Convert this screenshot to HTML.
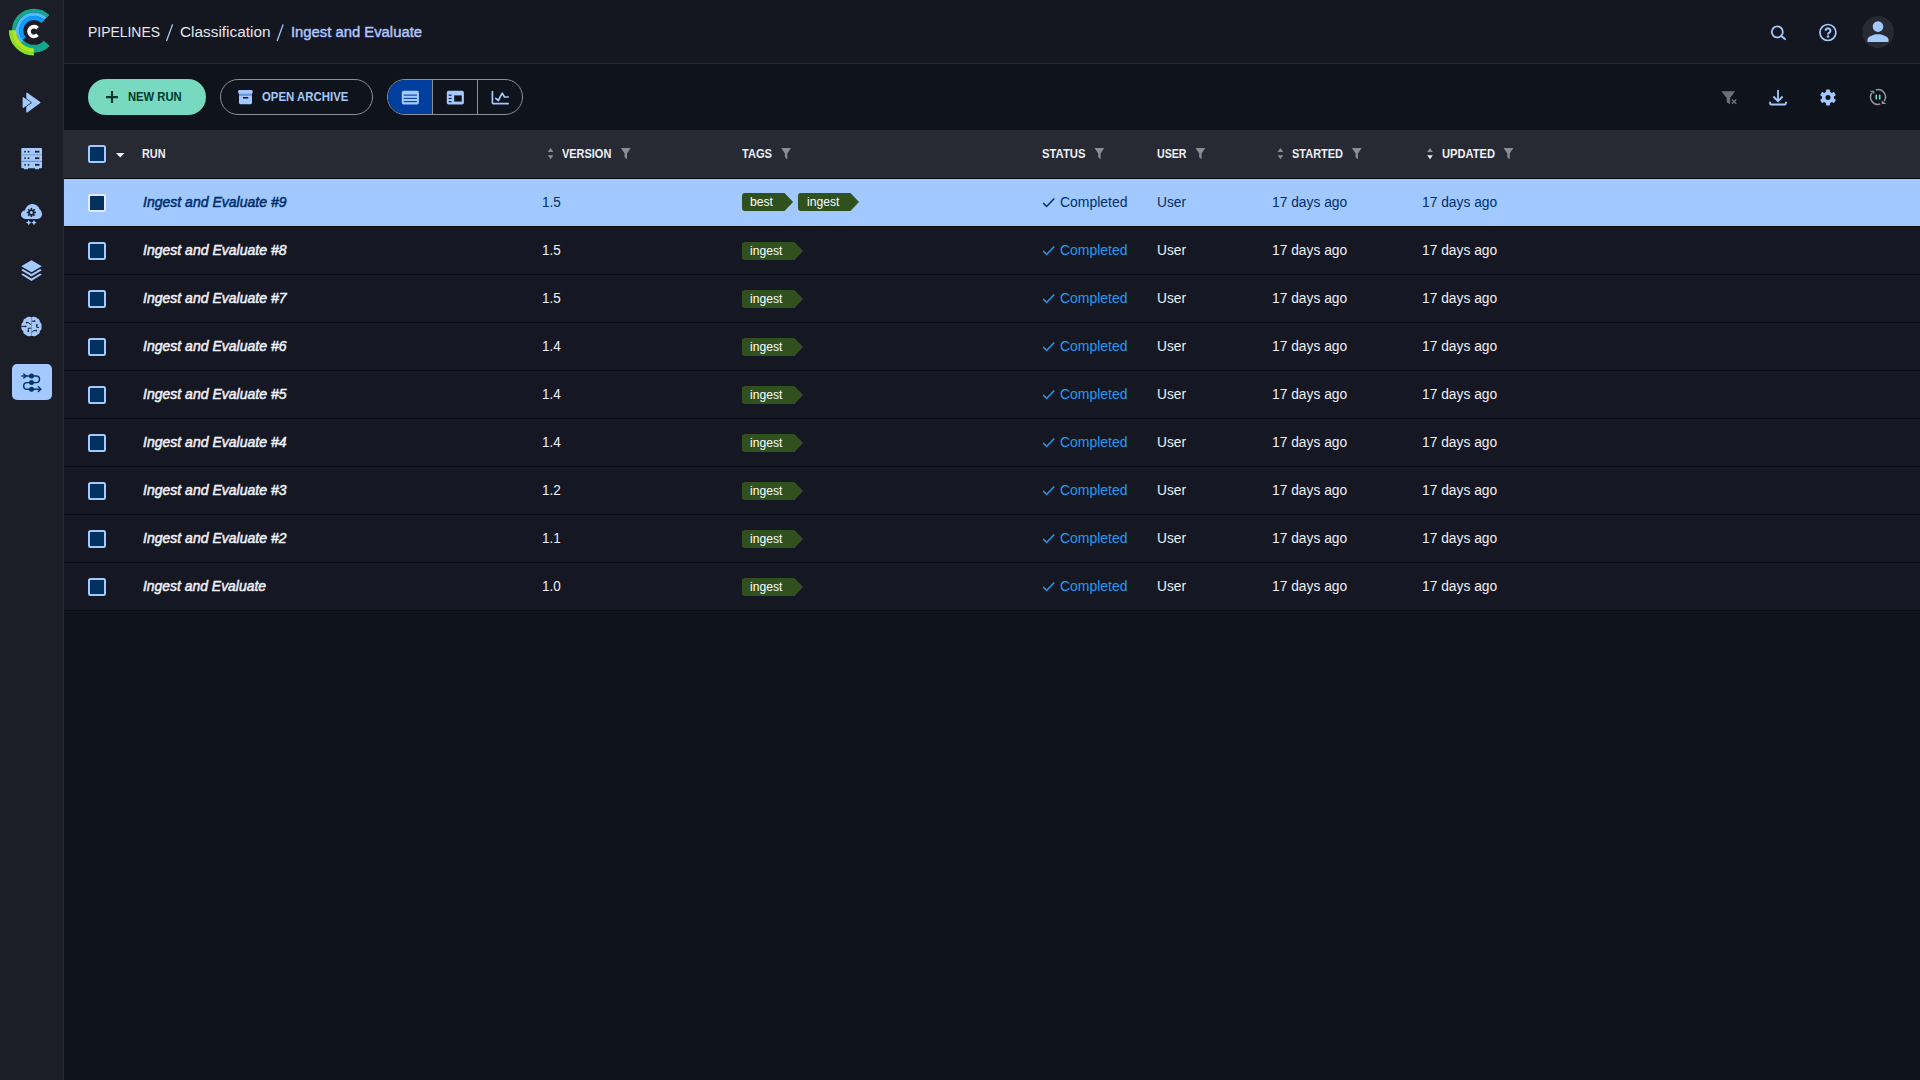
<!DOCTYPE html>
<html><head><meta charset="utf-8"><title>ClearML</title>
<style>
html,body{margin:0;padding:0;}
body{width:1920px;height:1080px;overflow:hidden;background:#0f131b;font-family:"Liberation Sans",sans-serif;position:relative;}
.b{position:absolute;box-sizing:border-box;}
.t{position:absolute;white-space:nowrap;transform-origin:0 50%;}
svg.ov{position:absolute;left:0;top:0;width:1920px;height:1080px;}
</style></head><body>
<div class="b" style="left:0px;top:0px;width:64px;height:1080px;background:#1b1e27;border-right:1px solid #252932;"></div>
<div class="b" style="left:64px;top:0px;width:1856px;height:64px;background:#141720;border-bottom:1px solid #252932;"></div>
<div class="b" style="left:64px;top:130px;width:1856px;height:48px;background:#272a33;"></div>
<div class="b" style="left:64px;top:178px;width:1856px;height:1px;background:#06080d;"></div>
<div class="b" style="left:64px;top:179px;width:1856px;height:47px;background:#a1c9ff;"></div>
<div class="b" style="left:64px;top:226px;width:1856px;height:1px;background:#06080d;"></div>
<div class="b" style="left:64px;top:227px;width:1856px;height:47px;background:#151822;"></div>
<div class="b" style="left:64px;top:274px;width:1856px;height:1px;background:#0a0d15;"></div>
<div class="b" style="left:64px;top:275px;width:1856px;height:47px;background:#151822;"></div>
<div class="b" style="left:64px;top:322px;width:1856px;height:1px;background:#0a0d15;"></div>
<div class="b" style="left:64px;top:323px;width:1856px;height:47px;background:#151822;"></div>
<div class="b" style="left:64px;top:370px;width:1856px;height:1px;background:#0a0d15;"></div>
<div class="b" style="left:64px;top:371px;width:1856px;height:47px;background:#151822;"></div>
<div class="b" style="left:64px;top:418px;width:1856px;height:1px;background:#0a0d15;"></div>
<div class="b" style="left:64px;top:419px;width:1856px;height:47px;background:#151822;"></div>
<div class="b" style="left:64px;top:466px;width:1856px;height:1px;background:#0a0d15;"></div>
<div class="b" style="left:64px;top:467px;width:1856px;height:47px;background:#151822;"></div>
<div class="b" style="left:64px;top:514px;width:1856px;height:1px;background:#0a0d15;"></div>
<div class="b" style="left:64px;top:515px;width:1856px;height:47px;background:#151822;"></div>
<div class="b" style="left:64px;top:562px;width:1856px;height:1px;background:#0a0d15;"></div>
<div class="b" style="left:64px;top:563px;width:1856px;height:47px;background:#151822;"></div>
<div class="b" style="left:64px;top:610px;width:1856px;height:1px;background:#0a0d15;"></div>
<div class="b" style="left:88px;top:79px;width:118px;height:36px;background:#76d9c0;border-radius:18px;"></div>
<div class="b" style="left:220px;top:79px;width:153px;height:36px;background:transparent;border-radius:18px;border:1px solid #8c8f98;"></div>
<div class="b" style="left:387px;top:79px;width:136px;height:36px;background:transparent;border-radius:18px;border:1px solid #8c8f98;overflow:hidden;"></div>
<div class="b" style="left:388px;top:80px;width:45px;height:34px;background:#003f9e;border-radius:17px 0 0 17px;"></div>
<div class="b" style="left:432px;top:80px;width:1px;height:34px;background:#8c8f98;"></div>
<div class="b" style="left:477px;top:80px;width:1px;height:34px;background:#8c8f98;"></div>
<div class="b" style="left:88px;top:194px;width:18px;height:18px;background:#00315f;border:2px solid #e6e8f3;border-radius:2.5px;"></div>
<div class="b" style="left:88px;top:242px;width:18px;height:18px;background:#00315f;border:2px solid #a3c9ff;border-radius:2.5px;"></div>
<div class="b" style="left:88px;top:290px;width:18px;height:18px;background:#00315f;border:2px solid #a3c9ff;border-radius:2.5px;"></div>
<div class="b" style="left:88px;top:338px;width:18px;height:18px;background:#00315f;border:2px solid #a3c9ff;border-radius:2.5px;"></div>
<div class="b" style="left:88px;top:386px;width:18px;height:18px;background:#00315f;border:2px solid #a3c9ff;border-radius:2.5px;"></div>
<div class="b" style="left:88px;top:434px;width:18px;height:18px;background:#00315f;border:2px solid #a3c9ff;border-radius:2.5px;"></div>
<div class="b" style="left:88px;top:482px;width:18px;height:18px;background:#00315f;border:2px solid #a3c9ff;border-radius:2.5px;"></div>
<div class="b" style="left:88px;top:530px;width:18px;height:18px;background:#00315f;border:2px solid #a3c9ff;border-radius:2.5px;"></div>
<div class="b" style="left:88px;top:578px;width:18px;height:18px;background:#00315f;border:2px solid #a3c9ff;border-radius:2.5px;"></div>
<div class="b" style="left:88px;top:145px;width:18px;height:18px;background:#00315f;border:2px solid #a3c9ff;border-radius:2.5px;"></div>
<svg class="ov" viewBox="0 0 1920 1080">
<path d="M172.6 24.4L166.5 41" stroke="#a3c9ff" stroke-width="1.3" fill="none"/>
<path d="M283.2 24.4L277.1 41" stroke="#a3c9ff" stroke-width="1.3" fill="none"/>
<path d="M745 193H784.5L793.1 202L784.5 211H745a3 3 0 0 1 -3 -3V196a3 3 0 0 1 3 -3z" fill="#30511d"/>
<path d="M801 193H850.4L859.0 202L850.4 211H801a3 3 0 0 1 -3 -3V196a3 3 0 0 1 3 -3z" fill="#30511d"/>
<path d="M1043.2 202.9L1046.6 206.5L1054.3 198.5" fill="none" stroke="#002e69" stroke-width="1.5"/>
<path d="M745 242H794.4L803.0 251L794.4 260H745a3 3 0 0 1 -3 -3V245a3 3 0 0 1 3 -3z" fill="#30511d"/>
<path d="M1043.2 250.9L1046.6 254.5L1054.3 246.5" fill="none" stroke="#1f9bf5" stroke-width="1.5"/>
<path d="M745 290H794.4L803.0 299L794.4 308H745a3 3 0 0 1 -3 -3V293a3 3 0 0 1 3 -3z" fill="#30511d"/>
<path d="M1043.2 298.90000000000003L1046.6 302.5L1054.3 294.5" fill="none" stroke="#1f9bf5" stroke-width="1.5"/>
<path d="M745 338H794.4L803.0 347L794.4 356H745a3 3 0 0 1 -3 -3V341a3 3 0 0 1 3 -3z" fill="#30511d"/>
<path d="M1043.2 346.90000000000003L1046.6 350.5L1054.3 342.5" fill="none" stroke="#1f9bf5" stroke-width="1.5"/>
<path d="M745 386H794.4L803.0 395L794.4 404H745a3 3 0 0 1 -3 -3V389a3 3 0 0 1 3 -3z" fill="#30511d"/>
<path d="M1043.2 394.90000000000003L1046.6 398.5L1054.3 390.5" fill="none" stroke="#1f9bf5" stroke-width="1.5"/>
<path d="M745 434H794.4L803.0 443L794.4 452H745a3 3 0 0 1 -3 -3V437a3 3 0 0 1 3 -3z" fill="#30511d"/>
<path d="M1043.2 442.90000000000003L1046.6 446.5L1054.3 438.5" fill="none" stroke="#1f9bf5" stroke-width="1.5"/>
<path d="M745 482H794.4L803.0 491L794.4 500H745a3 3 0 0 1 -3 -3V485a3 3 0 0 1 3 -3z" fill="#30511d"/>
<path d="M1043.2 490.90000000000003L1046.6 494.5L1054.3 486.5" fill="none" stroke="#1f9bf5" stroke-width="1.5"/>
<path d="M745 530H794.4L803.0 539L794.4 548H745a3 3 0 0 1 -3 -3V533a3 3 0 0 1 3 -3z" fill="#30511d"/>
<path d="M1043.2 538.9L1046.6 542.5L1054.3 534.5" fill="none" stroke="#1f9bf5" stroke-width="1.5"/>
<path d="M745 578H794.4L803.0 587L794.4 596H745a3 3 0 0 1 -3 -3V581a3 3 0 0 1 3 -3z" fill="#30511d"/>
<path d="M1043.2 586.9L1046.6 590.5L1054.3 582.5" fill="none" stroke="#1f9bf5" stroke-width="1.5"/>
<path d="M116 153h8.4l-4.2 4.6z" fill="#eef0fa"/>
<g fill="none">
<path d="M48.04 16.46A20.0 20.0 0 1 0 48.04 44.74" stroke="#14a88b" stroke-width="3.9"/>
<path d="M46.70 43.40A18.1 18.1 0 0 1 20.24 42.47" stroke="#14a88b" stroke-width="7.7"/>
<path d="M45.29 18.80A16.4 16.4 0 0 0 21.91 41.78" stroke="#4fb9ff" stroke-width="3.5"/>
<path d="M42.88 21.62A12.7 12.7 0 0 0 24.17 38.76" stroke="#0d9bff" stroke-width="4.1"/>
<path d="M33.90 50.50A19.9 19.9 0 0 1 14.00 30.25" stroke="#b4e51c" stroke-width="4.2"/>
<path d="M33.90 54.00A23.4 23.4 0 0 1 10.50 30.19" stroke="#8be228" stroke-width="3.2"/>
<path d="M37.54 28.22A4.9 4.9 0 1 0 37.54 34.78" stroke="#ffffff" stroke-width="3.6"/>
</g>
<path d="M26.9 93.2L39.9 102.6L26.9 112z" fill="#a3c9ff" stroke="#a3c9ff" stroke-width="1.2" stroke-linejoin="round"/>
<path d="M23.1 97.6L30.4 102.6L23.1 107.6z" fill="#a3c9ff" stroke="#1b1e27" stroke-width="2.3" stroke-linejoin="round" paint-order="stroke"/>
<path d="M23.1 97.6L30.4 102.6L23.1 107.6z" fill="#a3c9ff" stroke="#a3c9ff" stroke-width="1" stroke-linejoin="round"/>
<rect x="21.3" y="148" width="20.7" height="20.2" rx="1" fill="#a3c9ff"/>
<rect x="21.3" y="154.3" width="20.7" height="1" fill="#7f9cd0"/><rect x="21.3" y="160.8" width="20.7" height="1" fill="#6f8abb"/>
<circle cx="25.1" cy="151.7" r="0.9" fill="#1b1e27"/><circle cx="28.6" cy="151.7" r="0.9" fill="#1b1e27"/><rect x="35" y="150.79999999999998" width="4.4" height="1.8" fill="#1b1e27"/>
<circle cx="25.1" cy="158.2" r="0.9" fill="#1b1e27"/><circle cx="28.6" cy="158.2" r="0.9" fill="#1b1e27"/><rect x="35" y="157.29999999999998" width="4.4" height="1.8" fill="#1b1e27"/>
<circle cx="25.1" cy="164.8" r="0.9" fill="#1b1e27"/><circle cx="28.6" cy="164.8" r="0.9" fill="#1b1e27"/><rect x="35" y="163.9" width="4.4" height="1.8" fill="#1b1e27"/>
<rect x="24" y="168" width="4" height="1.2" fill="#a3c9ff"/><rect x="35" y="168" width="4" height="1.2" fill="#a3c9ff"/>
<path d="M25.4 219C22.9 219 21 217 21 214.6C21 212.3 22.8 210.4 25.1 210.2C25.9 206.7 28.9 204.1 32.6 204.1C35.9 204.1 38.6 206.2 39.6 209.2C40.9 209.9 42 211.9 42 214.3C42 216.9 39.9 219 37.3 219z" fill="#a3c9ff"/>
<rect x="30.599999999999998" y="207.9" width="1.6" height="9.2" transform="rotate(0 31.4 212.5)" fill="#1b1e27"/><rect x="30.599999999999998" y="207.9" width="1.6" height="9.2" transform="rotate(45 31.4 212.5)" fill="#1b1e27"/><rect x="30.599999999999998" y="207.9" width="1.6" height="9.2" transform="rotate(90 31.4 212.5)" fill="#1b1e27"/><rect x="30.599999999999998" y="207.9" width="1.6" height="9.2" transform="rotate(135 31.4 212.5)" fill="#1b1e27"/>
<circle cx="31.4" cy="212.5" r="3.1" fill="#1b1e27"/><circle cx="31.4" cy="212.5" r="1.5" fill="#a3c9ff"/>
<path d="M28.7 219.8l0.9 1.9l1.9 0.9l-1.9 0.9l-0.9 1.9l-0.9 -1.9l-1.9 -0.9l1.9 -0.9z" fill="#a3c9ff"/>
<path d="M34.0 219.8l0.9 1.9l1.9 0.9l-1.9 0.9l-0.9 1.9l-0.9 -1.9l-1.9 -0.9l1.9 -0.9z" fill="#a3c9ff"/>
<path d="M31.5 260.2L41.8 266.3L31.5 272.3L21.2 266.3z" fill="#a3c9ff"/>
<path d="M22.9 269.1L31.5 274.1L40.1 269.1L41.8 270.2L31.5 276.6L21.2 270.2z" fill="#a3c9ff"/>
<path d="M22.9 273.5L31.5 278.5L40.1 273.5L41.8 274.6L31.5 281L21.2 274.6z" fill="#a3c9ff"/>
<g fill="#a3c9ff">
<path d="M31.5 317.6c-1.4 -1.2 -4.6 -1 -5.7 0.8c-1.8 0.1 -3 1.9 -2.6 3.7c-1.5 0.9 -2.3 2.8 -1.6 4.5c-0.7 1.7 0 3.6 1.6 4.5c-0.3 1.8 0.9 3.5 2.7 3.7c1.1 1.8 4.2 2 5.6 0.8z"/>
<path d="M31.5 317.6c1.4 -1.2 4.6 -1 5.7 0.8c1.8 0.1 3 1.9 2.6 3.7c1.5 0.9 2.3 2.8 1.6 4.5c0.7 1.7 0 3.6 -1.6 4.5c0.3 1.8 -0.9 3.5 -2.7 3.7c-1.1 1.8 -4.2 2 -5.6 0.8z"/>
</g>
<path d="M31.5 317.4v18.6" stroke="#7c8fd0" stroke-width="0.7" fill="none"/>
<g stroke="#1b1e27" stroke-width="1" fill="none"><path d="M21.6 326.4h3.8"/><path d="M27 322.6h1.6l1.2 1.6h1.1"/><path d="M28.3 330.8v-2.6h2.6"/><path d="M32.1 321.2h2"/><path d="M36.8 325.2v2.2h2.2"/><path d="M32.1 332.4l1.4 -1.8h2.2"/></g>
<g fill="#1b1e27"><circle cx="25.6" cy="326.4" r="0.9"/><circle cx="26.6" cy="322.6" r="0.9"/><circle cx="28.3" cy="331.2" r="0.9"/><circle cx="34.5" cy="321.1" r="0.9"/><circle cx="36.8" cy="324.9" r="0.9"/><circle cx="36.2" cy="330.6" r="0.9"/></g>
<rect x="12" y="364" width="40" height="36" rx="5" fill="#a3c9ff"/>
<g fill="none" stroke="#003568" stroke-width="1.45" stroke-linecap="round" stroke-linejoin="round">
<path d="M22 376h14.2a3.3 3.3 0 0 1 0 6.6h-9.2a3.3 3.3 0 0 0 0 6.6h13.6"/>
<path d="M23.8 373.9l2.1 2.1l-2.1 2.1"/>
<path d="M38.3 386.8l2.5 2.4l-2.5 2.4"/>
</g>
<g fill="#003568"><circle cx="31.5" cy="376" r="2.5"/><circle cx="31.5" cy="382.6" r="2.5"/><circle cx="31.5" cy="389.2" r="2.5"/></g>
<circle cx="1777.3" cy="31.9" r="5.5" fill="none" stroke="#a3c9ff" stroke-width="1.8"/><path d="M1781.3 35.9L1784.9 39.1" stroke="#a3c9ff" stroke-width="2" stroke-linecap="round"/>
<circle cx="1827.9" cy="32.5" r="8" fill="none" stroke="#a3c9ff" stroke-width="1.7"/>
<path d="M1825.6 30.7a2.4 2.4 0 1 1 3.7 2c-0.8 0.5 -1.3 0.9 -1.3 1.7" fill="none" stroke="#a3c9ff" stroke-width="2.1"/><circle cx="1828" cy="36.5" r="1.2" fill="#a3c9ff"/>
<circle cx="1878" cy="32" r="16" fill="#272a33"/>
<circle cx="1878" cy="26.6" r="5.3" fill="#a3c9ff"/><path d="M1867.5 42v-2.2c0 -3.6 7 -5.5 10.5 -5.5s10.5 1.9 10.5 5.5v2.2z" fill="#a3c9ff"/>
<path d="M106 97.1h12M112 91.1v12" stroke="#00382c" stroke-width="2.2" fill="none"/>
<path d="M239 93h13v9.8a1.4 1.4 0 0 1 -1.4 1.4h-10.2a1.4 1.4 0 0 1 -1.4 -1.4z" fill="#a3c9ff"/>
<rect x="239" y="93.4" width="13" height="2.5" fill="#7194d0"/>
<rect x="238.2" y="90.1" width="14.4" height="3.5" rx="1.2" fill="#a3c9ff"/>
<rect x="242.9" y="97" width="5.4" height="1.5" rx="0.5" fill="#0f131b"/>
<rect x="401.8" y="90.8" width="17.1" height="13.7" rx="1.8" fill="#a3c9ff"/>
<rect x="403.8" y="94.55" width="13.1" height="1.1" fill="#003f9e"/>
<rect x="403.8" y="97.85000000000001" width="13.1" height="1.1" fill="#003f9e"/>
<rect x="403.8" y="101.05" width="13.1" height="1.1" fill="#003f9e"/>
<rect x="446.8" y="90.8" width="17.1" height="13.7" rx="1.8" fill="#a3c9ff"/><rect x="454.2" y="95.4" width="7.5" height="6.2" fill="#0f131b"/>
<rect x="448.7" y="94.65" width="2.9" height="1.1" fill="#0f131b"/>
<rect x="448.7" y="97.95" width="2.9" height="1.1" fill="#0f131b"/>
<rect x="448.7" y="101.15" width="2.9" height="1.1" fill="#0f131b"/>
<g fill="none" stroke="#a3c9ff" stroke-width="1.7" stroke-linecap="round" stroke-linejoin="round"><path d="M492.4 91.6v11.2a0.9 0.9 0 0 0 0.9 0.9h14.8"/><path d="M495.8 98.3l2.5 2.2l3.9 -7.4l2.3 3.9h3.6"/></g>
<path d="M1721.3 91.3h13.8l-5 6.6v6.3l-3.4 -1.9v-4.4z" fill="#6f7075"/><path d="M1731.9 99.4l4.4 4.4m0 -4.4l-4.4 4.4" stroke="#6f7075" stroke-width="1.4" fill="none"/>
<g fill="none" stroke="#a3c9ff" stroke-width="1.8"><path d="M1778 90v11"/><path d="M1773.4 96.5l4.6 4.7l4.6 -4.7"/><path d="M1770.1 101.8v1.8a0.9 0.9 0 0 0 0.9 0.9h14a0.9 0.9 0 0 0 0.9 -0.9v-1.8"/></g>
<rect x="1826" y="89.5" width="4" height="16" rx="0.8" transform="rotate(0 1828 97.5)" fill="#a3c9ff"/><rect x="1826" y="89.5" width="4" height="16" rx="0.8" transform="rotate(60 1828 97.5)" fill="#a3c9ff"/><rect x="1826" y="89.5" width="4" height="16" rx="0.8" transform="rotate(120 1828 97.5)" fill="#a3c9ff"/>
<circle cx="1828" cy="97.5" r="6" fill="#a3c9ff"/><circle cx="1828" cy="97.5" r="2.5" fill="#0f131b"/>
<g fill="none" stroke="#9094a0" stroke-width="1.5"><path d="M1875.84 89.92A7.4 7.4 0 0 1 1884.21 101.03"/><path d="M1880.16 104.08A7.4 7.4 0 0 1 1871.79 92.97"/></g>
<path d="M1869.6 90.8h4.7v3.3z" fill="#9094a0"/><path d="M1886.3 104h-4.6v-3.4z" fill="#9094a0"/>
<rect x="1875.5" y="94.4" width="1.6" height="5.2" rx="0.5" fill="#76dcc0"/><rect x="1878.9" y="94.4" width="1.6" height="5.2" rx="0.5" fill="#76dcc0"/>
<path d="M547.8 152l2.8 -4l2.8 4z" fill="#8a8d95"/><path d="M547.8 155.3l2.8 4l2.8 -4z" fill="#8a8d95"/>
<path d="M620.9 148h9.8l-3.7 5.4v5.8l-2.4 -1.9v-3.9z" fill="#8a8d95"/>
<path d="M781.2 148h9.8l-3.7 5.4v5.8l-2.4 -1.9v-3.9z" fill="#8a8d95"/>
<path d="M1094.5 148h9.8l-3.7 5.4v5.8l-2.4 -1.9v-3.9z" fill="#8a8d95"/>
<path d="M1195.5 148h9.8l-3.7 5.4v5.8l-2.4 -1.9v-3.9z" fill="#8a8d95"/>
<path d="M1277.6 152l2.8 -4l2.8 4z" fill="#8a8d95"/><path d="M1277.6 155.3l2.8 4l2.8 -4z" fill="#8a8d95"/>
<path d="M1351.9 148h9.8l-3.7 5.4v5.8l-2.4 -1.9v-3.9z" fill="#8a8d95"/>
<path d="M1427.2 152l2.8 -4l2.8 4z" fill="#8a8d95"/><path d="M1427.2 155.3l2.8 4l2.8 -4z" fill="#eef0fa"/>
<path d="M1503.6 148h9.8l-3.7 5.4v5.8l-2.4 -1.9v-3.9z" fill="#8a8d95"/>
</svg>
<span class="t" style="left:88.00px;top:21.03px;font-size:15.5px;line-height:22px;color:#e4e6f2;transform:scaleX(0.8986);">PIPELINES</span>
<span class="t" style="left:180.00px;top:21.03px;font-size:15.5px;line-height:22px;color:#e4e6f2;transform:scaleX(0.9911);">Classification</span>
<span class="t" style="left:291.30px;top:21.03px;font-size:15.5px;line-height:22px;color:#b2c5ff;-webkit-text-stroke:0.45px #b2c5ff;transform:scaleX(0.9560);">Ingest and Evaluate</span>
<span class="t" style="left:128.40px;top:88.64px;font-size:12px;line-height:17px;color:#00382c;font-weight:700;transform:scaleX(0.9350);">NEW RUN</span>
<span class="t" style="left:261.60px;top:88.64px;font-size:12px;line-height:17px;color:#a3c9ff;font-weight:700;transform:scaleX(0.9504);">OPEN ARCHIVE</span>
<span class="t" style="left:142.40px;top:145.54px;font-size:12px;line-height:17px;color:#eef0fa;font-weight:700;transform:scaleX(0.9077);">RUN</span>
<span class="t" style="left:562.20px;top:145.54px;font-size:12px;line-height:17px;color:#eef0fa;font-weight:700;transform:scaleX(0.9127);">VERSION</span>
<span class="t" style="left:742.20px;top:145.54px;font-size:12px;line-height:17px;color:#eef0fa;font-weight:700;transform:scaleX(0.9244);">TAGS</span>
<span class="t" style="left:1042.00px;top:145.54px;font-size:12px;line-height:17px;color:#eef0fa;font-weight:700;transform:scaleX(0.9412);">STATUS</span>
<span class="t" style="left:1157.00px;top:145.54px;font-size:12px;line-height:17px;color:#eef0fa;font-weight:700;transform:scaleX(0.8847);">USER</span>
<span class="t" style="left:1292.00px;top:145.54px;font-size:12px;line-height:17px;color:#eef0fa;font-weight:700;transform:scaleX(0.9143);">STARTED</span>
<span class="t" style="left:1441.80px;top:145.54px;font-size:12px;line-height:17px;color:#eef0fa;font-weight:700;transform:scaleX(0.9278);">UPDATED</span>
<span class="t" style="left:142.60px;top:192.15px;font-size:14px;line-height:20px;color:#002e69;font-style:italic;-webkit-text-stroke:0.5px #002e69;transform:scaleX(1.0019);">Ingest and Evaluate #9</span>
<span class="t" style="left:541.80px;top:192.15px;font-size:14px;line-height:20px;color:#002e69;transform:scaleX(0.9657);">1.5</span>
<span class="t" style="left:1060.20px;top:191.65px;font-size:14px;line-height:20px;color:#002e69;transform:scaleX(0.9970);">Completed</span>
<span class="t" style="left:1157.00px;top:192.15px;font-size:14px;line-height:20px;color:#002e69;transform:scaleX(0.9810);">User</span>
<span class="t" style="left:1272.30px;top:192.15px;font-size:14px;line-height:20px;color:#002e69;transform:scaleX(0.9856);">17 days ago</span>
<span class="t" style="left:1422.20px;top:192.15px;font-size:14px;line-height:20px;color:#002e69;transform:scaleX(0.9856);">17 days ago</span>
<span class="t" style="left:750.00px;top:193.54px;font-size:12px;line-height:17px;color:#ffffff;transform:scaleX(1.0138);">best</span>
<span class="t" style="left:806.70px;top:193.54px;font-size:12px;line-height:17px;color:#ffffff;transform:scaleX(1.0084);">ingest</span>
<span class="t" style="left:142.60px;top:240.15px;font-size:14px;line-height:20px;color:#eef0fa;font-style:italic;-webkit-text-stroke:0.5px #eef0fa;transform:scaleX(1.0019);">Ingest and Evaluate #8</span>
<span class="t" style="left:541.80px;top:240.15px;font-size:14px;line-height:20px;color:#eef0fa;transform:scaleX(0.9657);">1.5</span>
<span class="t" style="left:1060.20px;top:239.65px;font-size:14px;line-height:20px;color:#1f9bf5;transform:scaleX(0.9970);">Completed</span>
<span class="t" style="left:1157.00px;top:240.15px;font-size:14px;line-height:20px;color:#eef0fa;transform:scaleX(0.9810);">User</span>
<span class="t" style="left:1272.30px;top:240.15px;font-size:14px;line-height:20px;color:#eef0fa;transform:scaleX(0.9856);">17 days ago</span>
<span class="t" style="left:1422.20px;top:240.15px;font-size:14px;line-height:20px;color:#eef0fa;transform:scaleX(0.9856);">17 days ago</span>
<span class="t" style="left:750.20px;top:242.54px;font-size:12px;line-height:17px;color:#ffffff;transform:scaleX(1.0084);">ingest</span>
<span class="t" style="left:142.60px;top:288.15px;font-size:14px;line-height:20px;color:#eef0fa;font-style:italic;-webkit-text-stroke:0.5px #eef0fa;transform:scaleX(1.0019);">Ingest and Evaluate #7</span>
<span class="t" style="left:541.80px;top:288.15px;font-size:14px;line-height:20px;color:#eef0fa;transform:scaleX(0.9657);">1.5</span>
<span class="t" style="left:1060.20px;top:287.65px;font-size:14px;line-height:20px;color:#1f9bf5;transform:scaleX(0.9970);">Completed</span>
<span class="t" style="left:1157.00px;top:288.15px;font-size:14px;line-height:20px;color:#eef0fa;transform:scaleX(0.9810);">User</span>
<span class="t" style="left:1272.30px;top:288.15px;font-size:14px;line-height:20px;color:#eef0fa;transform:scaleX(0.9856);">17 days ago</span>
<span class="t" style="left:1422.20px;top:288.15px;font-size:14px;line-height:20px;color:#eef0fa;transform:scaleX(0.9856);">17 days ago</span>
<span class="t" style="left:750.20px;top:290.54px;font-size:12px;line-height:17px;color:#ffffff;transform:scaleX(1.0084);">ingest</span>
<span class="t" style="left:142.60px;top:336.15px;font-size:14px;line-height:20px;color:#eef0fa;font-style:italic;-webkit-text-stroke:0.5px #eef0fa;transform:scaleX(1.0019);">Ingest and Evaluate #6</span>
<span class="t" style="left:541.80px;top:336.15px;font-size:14px;line-height:20px;color:#eef0fa;transform:scaleX(0.9657);">1.4</span>
<span class="t" style="left:1060.20px;top:335.65px;font-size:14px;line-height:20px;color:#1f9bf5;transform:scaleX(0.9970);">Completed</span>
<span class="t" style="left:1157.00px;top:336.15px;font-size:14px;line-height:20px;color:#eef0fa;transform:scaleX(0.9810);">User</span>
<span class="t" style="left:1272.30px;top:336.15px;font-size:14px;line-height:20px;color:#eef0fa;transform:scaleX(0.9856);">17 days ago</span>
<span class="t" style="left:1422.20px;top:336.15px;font-size:14px;line-height:20px;color:#eef0fa;transform:scaleX(0.9856);">17 days ago</span>
<span class="t" style="left:750.20px;top:338.54px;font-size:12px;line-height:17px;color:#ffffff;transform:scaleX(1.0084);">ingest</span>
<span class="t" style="left:142.60px;top:384.15px;font-size:14px;line-height:20px;color:#eef0fa;font-style:italic;-webkit-text-stroke:0.5px #eef0fa;transform:scaleX(1.0019);">Ingest and Evaluate #5</span>
<span class="t" style="left:541.80px;top:384.15px;font-size:14px;line-height:20px;color:#eef0fa;transform:scaleX(0.9657);">1.4</span>
<span class="t" style="left:1060.20px;top:383.65px;font-size:14px;line-height:20px;color:#1f9bf5;transform:scaleX(0.9970);">Completed</span>
<span class="t" style="left:1157.00px;top:384.15px;font-size:14px;line-height:20px;color:#eef0fa;transform:scaleX(0.9810);">User</span>
<span class="t" style="left:1272.30px;top:384.15px;font-size:14px;line-height:20px;color:#eef0fa;transform:scaleX(0.9856);">17 days ago</span>
<span class="t" style="left:1422.20px;top:384.15px;font-size:14px;line-height:20px;color:#eef0fa;transform:scaleX(0.9856);">17 days ago</span>
<span class="t" style="left:750.20px;top:386.54px;font-size:12px;line-height:17px;color:#ffffff;transform:scaleX(1.0084);">ingest</span>
<span class="t" style="left:142.60px;top:432.15px;font-size:14px;line-height:20px;color:#eef0fa;font-style:italic;-webkit-text-stroke:0.5px #eef0fa;transform:scaleX(1.0019);">Ingest and Evaluate #4</span>
<span class="t" style="left:541.80px;top:432.15px;font-size:14px;line-height:20px;color:#eef0fa;transform:scaleX(0.9657);">1.4</span>
<span class="t" style="left:1060.20px;top:431.65px;font-size:14px;line-height:20px;color:#1f9bf5;transform:scaleX(0.9970);">Completed</span>
<span class="t" style="left:1157.00px;top:432.15px;font-size:14px;line-height:20px;color:#eef0fa;transform:scaleX(0.9810);">User</span>
<span class="t" style="left:1272.30px;top:432.15px;font-size:14px;line-height:20px;color:#eef0fa;transform:scaleX(0.9856);">17 days ago</span>
<span class="t" style="left:1422.20px;top:432.15px;font-size:14px;line-height:20px;color:#eef0fa;transform:scaleX(0.9856);">17 days ago</span>
<span class="t" style="left:750.20px;top:434.54px;font-size:12px;line-height:17px;color:#ffffff;transform:scaleX(1.0084);">ingest</span>
<span class="t" style="left:142.60px;top:480.15px;font-size:14px;line-height:20px;color:#eef0fa;font-style:italic;-webkit-text-stroke:0.5px #eef0fa;transform:scaleX(1.0019);">Ingest and Evaluate #3</span>
<span class="t" style="left:541.80px;top:480.15px;font-size:14px;line-height:20px;color:#eef0fa;transform:scaleX(0.9657);">1.2</span>
<span class="t" style="left:1060.20px;top:479.65px;font-size:14px;line-height:20px;color:#1f9bf5;transform:scaleX(0.9970);">Completed</span>
<span class="t" style="left:1157.00px;top:480.15px;font-size:14px;line-height:20px;color:#eef0fa;transform:scaleX(0.9810);">User</span>
<span class="t" style="left:1272.30px;top:480.15px;font-size:14px;line-height:20px;color:#eef0fa;transform:scaleX(0.9856);">17 days ago</span>
<span class="t" style="left:1422.20px;top:480.15px;font-size:14px;line-height:20px;color:#eef0fa;transform:scaleX(0.9856);">17 days ago</span>
<span class="t" style="left:750.20px;top:482.54px;font-size:12px;line-height:17px;color:#ffffff;transform:scaleX(1.0084);">ingest</span>
<span class="t" style="left:142.60px;top:528.15px;font-size:14px;line-height:20px;color:#eef0fa;font-style:italic;-webkit-text-stroke:0.5px #eef0fa;transform:scaleX(1.0019);">Ingest and Evaluate #2</span>
<span class="t" style="left:541.80px;top:528.15px;font-size:14px;line-height:20px;color:#eef0fa;transform:scaleX(0.9657);">1.1</span>
<span class="t" style="left:1060.20px;top:527.65px;font-size:14px;line-height:20px;color:#1f9bf5;transform:scaleX(0.9970);">Completed</span>
<span class="t" style="left:1157.00px;top:528.15px;font-size:14px;line-height:20px;color:#eef0fa;transform:scaleX(0.9810);">User</span>
<span class="t" style="left:1272.30px;top:528.15px;font-size:14px;line-height:20px;color:#eef0fa;transform:scaleX(0.9856);">17 days ago</span>
<span class="t" style="left:1422.20px;top:528.15px;font-size:14px;line-height:20px;color:#eef0fa;transform:scaleX(0.9856);">17 days ago</span>
<span class="t" style="left:750.20px;top:530.54px;font-size:12px;line-height:17px;color:#ffffff;transform:scaleX(1.0084);">ingest</span>
<span class="t" style="left:142.60px;top:576.15px;font-size:14px;line-height:20px;color:#eef0fa;font-style:italic;-webkit-text-stroke:0.5px #eef0fa;transform:scaleX(0.9938);">Ingest and Evaluate</span>
<span class="t" style="left:541.80px;top:576.15px;font-size:14px;line-height:20px;color:#eef0fa;transform:scaleX(0.9657);">1.0</span>
<span class="t" style="left:1060.20px;top:575.65px;font-size:14px;line-height:20px;color:#1f9bf5;transform:scaleX(0.9970);">Completed</span>
<span class="t" style="left:1157.00px;top:576.15px;font-size:14px;line-height:20px;color:#eef0fa;transform:scaleX(0.9810);">User</span>
<span class="t" style="left:1272.30px;top:576.15px;font-size:14px;line-height:20px;color:#eef0fa;transform:scaleX(0.9856);">17 days ago</span>
<span class="t" style="left:1422.20px;top:576.15px;font-size:14px;line-height:20px;color:#eef0fa;transform:scaleX(0.9856);">17 days ago</span>
<span class="t" style="left:750.20px;top:578.54px;font-size:12px;line-height:17px;color:#ffffff;transform:scaleX(1.0084);">ingest</span>
</body></html>
